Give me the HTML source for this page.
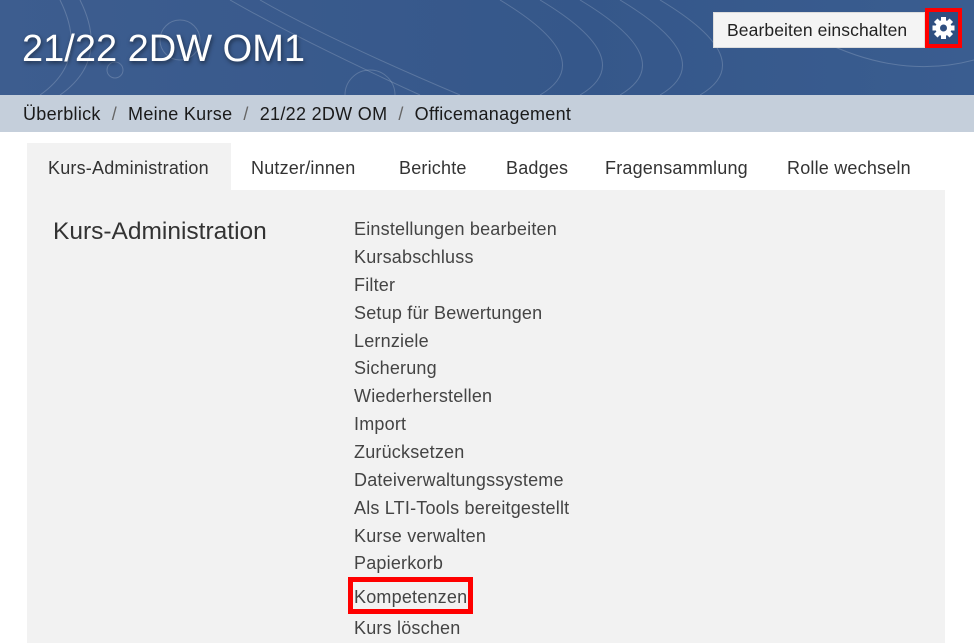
<!DOCTYPE html>
<html><head><meta charset="utf-8"><style>
*{margin:0;padding:0;box-sizing:border-box}
body{width:974px;height:643px;overflow:hidden;background:#fff;font-family:"Liberation Sans",sans-serif;position:relative}
.hdr{position:absolute;left:0;top:0;width:974px;height:95px;background:linear-gradient(90deg,#3d5d8f,#35578a 60%,#3a5d90);overflow:hidden}
.bc{position:absolute;left:0;top:95px;width:974px;height:37px;background:#c5cfdb;font-size:18px;letter-spacing:0.3px;color:#1a1a1a;padding:9px 0 0 23px;white-space:nowrap}
.bc span.s{color:#666;margin:0 11px}
.title{position:absolute;left:22px;top:28px;font-size:38px;color:#fff;text-shadow:1px 2px 4px rgba(0,0,0,.5)}
.btn{position:absolute;left:713px;top:12px;width:212px;height:36px;background:#f4f4f4;border:1px solid #ddd;font-size:17.5px;letter-spacing:0.1px;color:#222;padding:7px 0 0 13px;white-space:nowrap}
.gear{position:absolute;left:925px;top:8px;width:37px;height:40px;border:4px solid #f00;background:#2f4f80}
.tabs{position:absolute;left:27px;top:143px;height:47px;font-size:18px;letter-spacing:0.2px;color:#333}
.tab{position:absolute;top:0;height:47px;padding-top:15px;white-space:nowrap}
.content{position:absolute;left:27px;top:190px;width:918px;height:453px;background:#f2f2f2}
.h{position:absolute;left:53px;top:218px;font-size:24.5px;color:#333}
.list{position:absolute;left:354px;top:219px;font-size:18px;letter-spacing:0.2px;color:#444}
.list div{position:absolute;left:0;white-space:nowrap}
.rb{position:absolute;left:348px;top:577px;width:125px;height:37px;border:5px solid #f00}
</style></head><body>
<div class="hdr">
<svg width="974" height="95" style="position:absolute;left:0;top:0" fill="none" stroke="rgba(255,255,255,0.18)" stroke-width="1">
<circle cx="180" cy="40" r="20"/><circle cx="115" cy="70" r="8"/><circle cx="370" cy="95" r="25"/>
<path d="M60 0 Q90 60 40 95"/><path d="M80 0 Q110 60 60 95"/><path d="M230 0 Q300 40 420 95"/><path d="M260 0 Q330 40 460 95"/>
<path d="M500 0 Q600 60 540 95"/><path d="M540 0 Q640 60 580 95"/><path d="M580 0 Q680 60 620 95"/><path d="M620 0 Q720 60 660 95"/>
<path d="M660 0 Q760 60 700 95"/><path d="M820 40 Q900 80 974 60"/>
</svg>
<div class="title">21/22 2DW OM1</div>
<div class="btn">Bearbeiten einschalten</div>
<div class="gear"><svg width="29" height="32" viewBox="0 0 29 32"><g transform="translate(14.5,16)" fill="#fff"><circle r="8"/><rect x="-2.5" y="-11" width="5" height="22"/><rect x="-2.5" y="-11" width="5" height="22" transform="rotate(45)"/><rect x="-2.5" y="-11" width="5" height="22" transform="rotate(90)"/><rect x="-2.5" y="-11" width="5" height="22" transform="rotate(135)"/><circle r="3.5" fill="#2f4f80"/></g></svg></div>
</div>
<div class="bc">Überblick<span class="s">/</span>Meine Kurse<span class="s">/</span>21/22 2DW OM<span class="s">/</span>Officemanagement</div>
<div class="content"></div>
<div class="tabs">
<div class="tab" style="left:0;width:204px;background:#f2f2f2;padding-left:21px">Kurs-Administration</div>
<div class="tab" style="left:224px">Nutzer/innen</div>
<div class="tab" style="left:372px">Berichte</div>
<div class="tab" style="left:479px">Badges</div>
<div class="tab" style="left:578px">Fragensammlung</div>
<div class="tab" style="left:760px">Rolle wechseln</div>
</div>
<div class="h">Kurs-Administration</div>
<div class="list">
<div style="top:0">Einstellungen bearbeiten</div>
<div style="top:28px">Kursabschluss</div>
<div style="top:56px">Filter</div>
<div style="top:84px">Setup für Bewertungen</div>
<div style="top:112px">Lernziele</div>
<div style="top:139px">Sicherung</div>
<div style="top:167px">Wiederherstellen</div>
<div style="top:195px">Import</div>
<div style="top:223px">Zurücksetzen</div>
<div style="top:251px">Dateiverwaltungssysteme</div>
<div style="top:279px">Als LTI-Tools bereitgestellt</div>
<div style="top:307px">Kurse verwalten</div>
<div style="top:334px">Papierkorb</div>
<div style="top:368px">Kompetenzen</div>
<div style="top:399px">Kurs löschen</div>
</div>
<div class="rb"></div>
</body></html>
